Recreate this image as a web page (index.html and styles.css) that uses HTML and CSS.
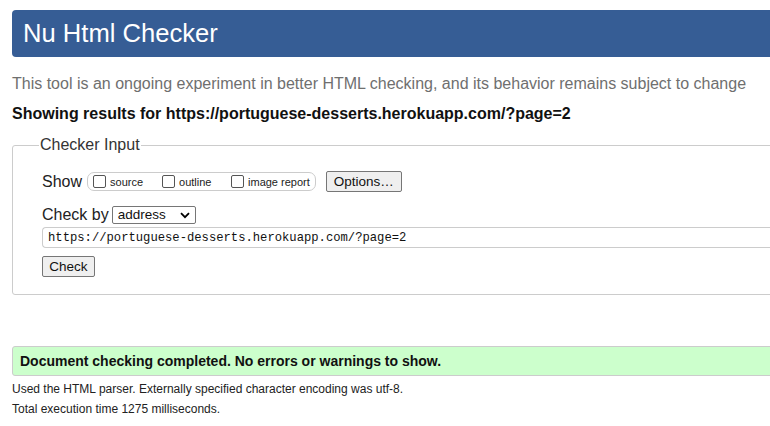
FILE: index.html
```html
<!DOCTYPE html>
<html>
<head>
<meta charset="utf-8">
<title>Nu Html Checker</title>
<link rel="stylesheet" href="styles.css">
</head>
<body>
<div class="page">
  <h1 class="header">Nu Html Checker</h1>
  <p class="intro">This tool is an ongoing experiment in better HTML checking, and its behavior remains subject to change</p>
  <p class="showing">Showing results for https://portuguese-desserts.herokuapp.com/?page=2</p>
  <fieldset class="checker">
    <legend class="legend">Checker Input</legend>
    <div class="row show-row">
      <span class="label">Show</span>
      <span class="opts">
        <label class="opt"><span class="cb"></span>source</label>
        <label class="opt"><span class="cb"></span>outline</label>
        <label class="opt"><span class="cb"></span>image report</label>
      </span>
      <span class="btn options">Options…</span>
    </div>
    <div class="row by-row">
      <span class="label">Check by</span>
      <span class="select">address<svg class="chev" width="10" height="7" viewBox="0 0 10 7"><path d="M1 1.2 L5 5.2 L9 1.2" fill="none" stroke="#000" stroke-width="1.8"/></svg></span>
    </div>
    <div class="url">https://portuguese-desserts.herokuapp.com/?page=2</div>
    <div class="row"><span class="btn check">Check</span></div>
  </fieldset>
  <div class="result">Document checking completed. No errors or warnings to show.</div>
  <p class="meta">Used the HTML parser. Externally specified character encoding was utf-8.</p>
  <p class="meta">Total execution time 1275 milliseconds.</p>
</div>
</body>
</html>
```
FILE: styles.css
```css
html, body {
  margin: 0;
  padding: 0;
  overflow: hidden;
  background: #fff;
}
body {
  font-family: "Liberation Sans", Arial, sans-serif;
  color: #111;
}
.page {
  width: 1000px;
  padding: 10px 0 0 12px;
}
.header {
  margin: 0;
  height: 47px;
  box-sizing: border-box;
  background: #365d95;
  color: #fff;
  font-weight: normal;
  font-size: 25.6px;
  line-height: 47px;
  padding-left: 11px;
  border-radius: 4px;
}
.intro {
  margin: 17px 0 0;
  font-size: 16px;
  line-height: 20px;
  color: #6f6f6f;
}
.showing {
  margin: 10px 0 0;
  font-size: 16px;
  font-weight: bold;
  line-height: 20px;
  color: #111;
}
.checker {
  margin: 12px 0 0;
  border: 1px solid #cccccc;
  border-radius: 3px;
  padding: 17px 0 17px 29px;
}
.legend {
  font-size: 16px;
  color: #333;
  padding: 0 1px;
  margin-left: -3px;
}
.row {
  display: flex;
  align-items: center;
}
.label {
  font-size: 16px;
  color: #222;
}
.show-row {
  height: 21px;
}
.opts {
  display: inline-flex;
  align-items: center;
  margin-left: 5px;
  height: 17px;
  border: 1px solid #cccccc;
  border-radius: 7px;
  padding: 0 5px;
  white-space: nowrap;
}
.opt {
  display: inline-flex;
  align-items: center;
  font-size: 11px;
  color: #222;
  white-space: nowrap;
}
.opt:nth-child(1) { width: 69px; }
.opt:nth-child(2) { width: 69px; }
.cb {
  width: 11px;
  height: 11px;
  border: 1px solid #555;
  border-radius: 2px;
  margin-right: 4px;
  background: #fff;
  flex: none;
}
.btn {
  display: inline-flex;
  align-items: center;
  justify-content: center;
  box-sizing: border-box;
  background: #efefef;
  border: 1px solid #767676;
  border-radius: 2px;
  font-size: 13.5px;
  color: #111;
}
.options {
  margin-left: 10px;
  width: 76px;
  height: 21px;
}
.by-row {
  margin-top: 13px;
  height: 19px;
}
.select {
  display: inline-flex;
  align-items: center;
  justify-content: space-between;
  box-sizing: border-box;
  margin-left: 3px;
  width: 84px;
  height: 18px;
  border: 1px solid #767676;
  border-radius: 2px;
  padding: 0 5px;
  font-size: 13.5px;
  color: #111;
}
.chev { margin-top: 1px; }
.url {
  margin-top: 3px;
  box-sizing: border-box;
  height: 21px;
  border: 1px solid #cccccc;
  border-right: none;
  border-radius: 4px 0 0 4px;
  padding-left: 5px;
  font-family: "Liberation Mono", "Courier New", monospace;
  font-size: 12.2px;
  line-height: 20px;
  color: #111;
}
.check {
  margin-top: 8px;
  width: 53px;
  height: 21px;
}
.result {
  margin-top: 51px;
  box-sizing: border-box;
  height: 30px;
  background: #ccffcc;
  border: 1px solid #cccccc;
  border-radius: 3px;
  padding-left: 7px;
  font-size: 14px;
  font-weight: bold;
  line-height: 28px;
  color: #111;
}
.meta {
  margin: 0;
  font-size: 12px;
  line-height: 20px;
  color: #222;
}
.result + .meta { margin-top: 3px; }
```
